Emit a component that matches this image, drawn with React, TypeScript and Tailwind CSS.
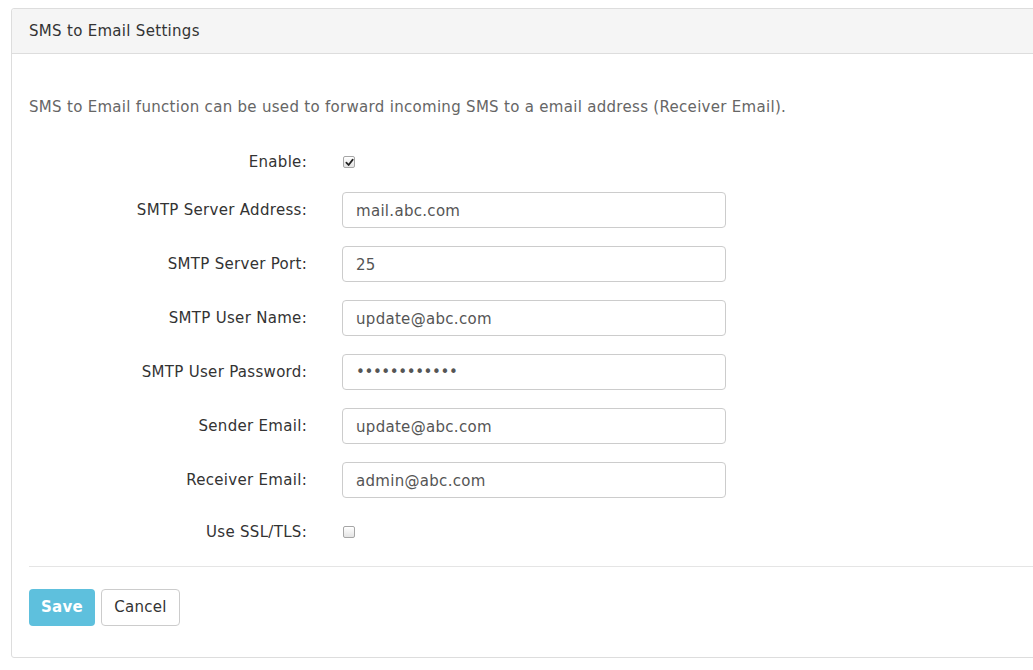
import React from "react";

const fields = [
  { label: "SMTP Server Address:", value: "mail.abc.com", type: "text" },
  { label: "SMTP Server Port:", value: "25", type: "text" },
  { label: "SMTP User Name:", value: "update@abc.com", type: "text" },
  { label: "SMTP User Password:", value: "abcdefghijkl", type: "password" },
  { label: "Sender Email:", value: "update@abc.com", type: "text" },
  { label: "Receiver Email:", value: "admin@abc.com", type: "text" },
];

const font = { fontFamily: '"DejaVu Sans", Verdana, sans-serif' };

function Check({ checked }: { checked: boolean }) {
  return (
    <span className="flex h-[12px] w-[12px] items-center justify-center rounded-[2px] border border-[#a6a6a6] bg-gradient-to-b from-white to-[#e4e4e4] shadow-[inset_0_1px_0_#fff]">
      {checked && (
        <svg viewBox="0 0 10 10" className="h-[9px] w-[9px]">
          <path d="M1.5 5.2 L4 7.8 L8.6 1.8" fill="none" stroke="#222" strokeWidth="1.9" strokeLinecap="round" strokeLinejoin="round" />
        </svg>
      )}
    </span>
  );
}

export default function App() {
  return (
    <div
      className="min-h-[670px] overflow-hidden bg-white pl-[11px] pt-[8px] text-[15px] tracking-[0.3px] text-[#333]"
      style={font}
    >
      <div className="w-[1040px] rounded-[3px] border border-[#dddddd]">
        <div className="flex h-[45px] items-center rounded-t-[3px] border-b border-[#dddddd] bg-[#f5f5f5] px-[17px]">
          <span>SMS to Email Settings</span>
        </div>

        <div className="px-[17px] pb-[31px] pt-[43px]">
          <p className="leading-[20px] text-[#666]">
            SMS to Email function can be used to forward incoming SMS to a email address (Receiver Email).
          </p>

          <div className="mt-[33px] flex flex-col gap-[18px]">
            <div className="flex h-[24px] items-center">
              <label className="w-[278px] pt-[1px] text-right">Enable:</label>
              <div className="ml-[36px]">
                <Check checked />
              </div>
            </div>

            {fields.map((f) => (
              <div key={f.label} className="flex h-[36px] items-center">
                <label className="w-[278px] pt-[1px] text-right">{f.label}</label>
                <input
                  readOnly
                  type={f.type}
                  value={f.value}
                  className={
                    f.type === "password"
                      ? "ml-[35px] h-[36px] w-[384px] rounded-[4px] border border-[#cccccc] bg-white px-[13px] text-[15px] tracking-[-0.4px] text-[#555] outline-none"
                      : "ml-[35px] h-[36px] w-[384px] rounded-[4px] border border-[#cccccc] bg-white px-[13px] pt-[1px] text-[15px] tracking-[0.3px] text-[#555] outline-none"
                  }
                  style={font}
                />
              </div>
            ))}

            <div className="mt-[4px] flex h-[24px] items-center">
              <label className="w-[278px] pt-[1px] text-right">Use SSL/TLS:</label>
              <div className="ml-[36px]">
                <Check checked={false} />
              </div>
            </div>
          </div>

          <hr className="mt-[22px] border-0 border-t border-[#e5e5e5]" />

          <div className="mt-[22px] flex gap-[6px]">
            <button className="h-[37px] w-[66px] rounded-[4px] bg-[#5ec0dd] font-bold text-white">
              Save
            </button>
            <button className="h-[37px] w-[79px] rounded-[4px] border border-[#cccccc] bg-white text-[#333]">
              Cancel
            </button>
          </div>
        </div>
      </div>
    </div>
  );
}
